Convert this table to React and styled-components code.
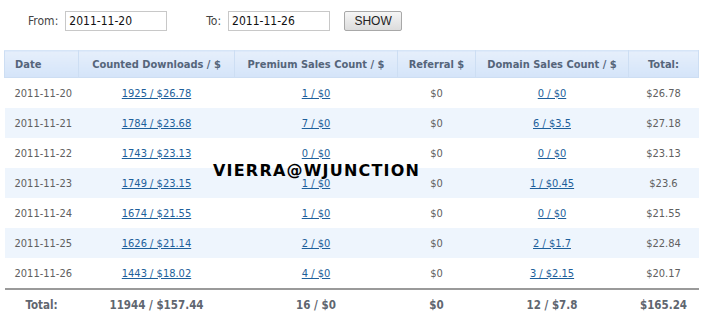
import React from "react";
import styled, { createGlobalStyle } from "styled-components";

const GlobalStyle = createGlobalStyle`
  body {
    margin: 0;
    background: #fff;
    font-family: "DejaVu Sans Condensed", "DejaVu Sans", sans-serif;
    font-size: 11px;
    color: #555;
  }
`;

const Page = styled.div`
  position: relative;
  width: 715px;
  height: 324px;
  padding: 11px 0 0 4px;
  box-sizing: border-box;
  overflow: hidden;
`;

const FilterBar = styled.form`
  display: flex;
  align-items: center;
  padding-left: 24px;
  height: 20px;
  margin-bottom: 19px;
`;

const Label = styled.label`
  font-size: 12px;
  color: #444;
  margin-right: 7px;
`;

const DateInput = styled.input`
  width: 102px;
  height: 20px;
  box-sizing: border-box;
  border: 1px solid #c8c8c8;
  padding: 0 3px;
  font-family: "DejaVu Sans Condensed", sans-serif;
  font-size: 12px;
  color: #111;
  margin-right: ${(p) => p.$gap || 0}px;
`;

const ShowButton = styled.button`
  width: 58px;
  height: 20px;
  border: 1px solid #a8a8a8;
  border-radius: 2px;
  background: linear-gradient(#f6f6f6, #dcdcdc);
  font-family: "Liberation Sans", Arial, sans-serif;
  font-size: 12px;
  color: #222;
  padding: 0;
`;

const Table = styled.table`
  border-collapse: collapse;
  width: 694px;
  table-layout: fixed;
`;

const HeadCell = styled.th`
  height: 27px;
  padding: 0;
  box-sizing: border-box;
  background: linear-gradient(#e6effb, #d4e4f9);
  border: 1px solid #cddef3;
  border-top-color: #d6e5f7;
  color: #55657a;
  font-weight: bold;
  font-size: 11px;
  text-align: ${(p) => p.$align || "center"};
  padding-left: ${(p) => (p.$align === "left" ? 10 : 0)}px;
`;

const Row = styled.tr`
  background: ${(p) => (p.$alt ? "#eef5fd" : "#fff")};
`;

const Cell = styled.td`
  height: 30px;
  padding: 0;
  text-align: ${(p) => p.$align || "center"};
  padding-left: ${(p) => (p.$align === "left" ? 10 : 0)}px;
  color: #606060;
`;

const NumLink = styled.a`
  color: #1d5f9b;
  text-decoration: underline;
`;

const TotalRow = styled.tr`
  border-top: 2px solid #9a9a9a;
`;

const TotalCell = styled.td`
  height: 30px;
  padding: 0;
  text-align: center;
  font-weight: bold;
  font-size: 11.5px;
  color: #5f6670;
`;

const Watermark = styled.div`
  position: absolute;
  left: 213px;
  top: 161px;
  font-family: "DejaVu Sans", sans-serif;
  font-weight: bold;
  font-size: 16px;
  letter-spacing: 1.2px;
  color: #000;
`;

const rows = [
  ["2011-11-20", "1925 / $26.78", "1 / $0", "$0", "0 / $0", "$26.78"],
  ["2011-11-21", "1784 / $23.68", "7 / $0", "$0", "6 / $3.5", "$27.18"],
  ["2011-11-22", "1743 / $23.13", "0 / $0", "$0", "0 / $0", "$23.13"],
  ["2011-11-23", "1749 / $23.15", "1 / $0", "$0", "1 / $0.45", "$23.6"],
  ["2011-11-24", "1674 / $21.55", "1 / $0", "$0", "0 / $0", "$21.55"],
  ["2011-11-25", "1626 / $21.14", "2 / $0", "$0", "2 / $1.7", "$22.84"],
  ["2011-11-26", "1443 / $18.02", "4 / $0", "$0", "3 / $2.15", "$20.17"],
];

const widths = [74, 156, 163, 78, 153, 70];

export default function App() {
  return (
    <Page>
      <GlobalStyle />
      <FilterBar onSubmit={(e) => e.preventDefault()}>
        <Label>From:</Label>
        <DateInput defaultValue="2011-11-20" $gap={39} />
        <Label>To:</Label>
        <DateInput defaultValue="2011-11-26" $gap={14} />
        <ShowButton>SHOW</ShowButton>
      </FilterBar>
      <Table>
        <colgroup>
          {widths.map((w, i) => (
            <col key={i} style={{ width: w }} />
          ))}
        </colgroup>
        <thead>
          <tr>
            <HeadCell $align="left">Date</HeadCell>
            <HeadCell>Counted Downloads / $</HeadCell>
            <HeadCell>Premium Sales Count / $</HeadCell>
            <HeadCell>Referral $</HeadCell>
            <HeadCell>Domain Sales Count / $</HeadCell>
            <HeadCell>Total:</HeadCell>
          </tr>
        </thead>
        <tbody>
          {rows.map((r, i) => (
            <Row key={r[0]} $alt={i % 2 === 1}>
              <Cell $align="left">{r[0]}</Cell>
              <Cell>
                <NumLink href="#">{r[1]}</NumLink>
              </Cell>
              <Cell>
                <NumLink href="#">{r[2]}</NumLink>
              </Cell>
              <Cell>{r[3]}</Cell>
              <Cell>
                <NumLink href="#">{r[4]}</NumLink>
              </Cell>
              <Cell>{r[5]}</Cell>
            </Row>
          ))}
          <TotalRow>
            <TotalCell>Total:</TotalCell>
            <TotalCell>11944 / $157.44</TotalCell>
            <TotalCell>16 / $0</TotalCell>
            <TotalCell>$0</TotalCell>
            <TotalCell>12 / $7.8</TotalCell>
            <TotalCell>$165.24</TotalCell>
          </TotalRow>
        </tbody>
      </Table>
      <Watermark>VIERRA@WJUNCTION</Watermark>
    </Page>
  );
}
